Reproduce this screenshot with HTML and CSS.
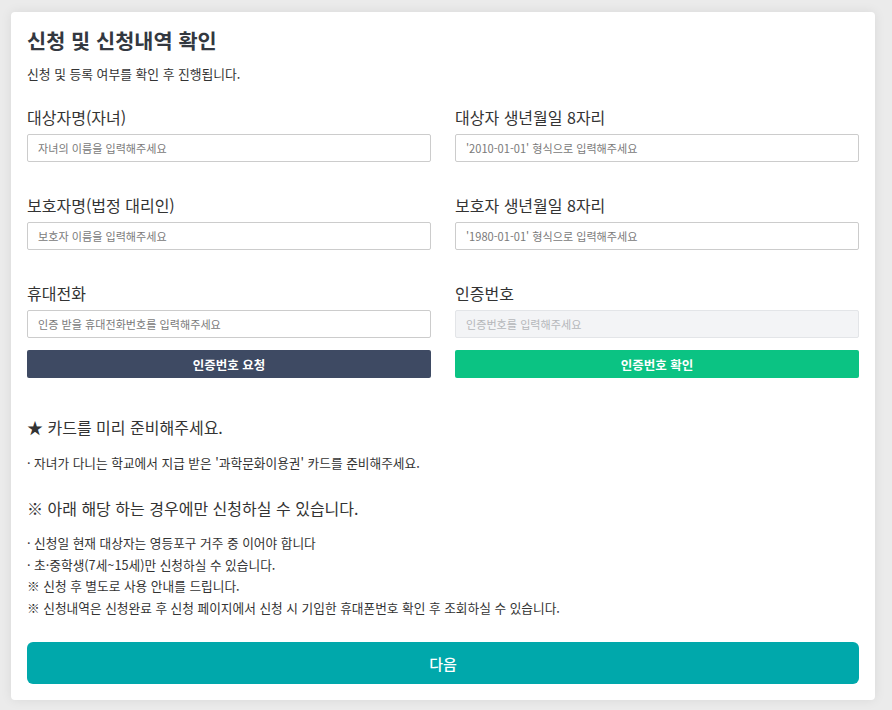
FILE: index.html
```html
<!DOCTYPE html>
<html lang="ko">
<head>
<meta charset="utf-8">
<title>신청 및 신청내역 확인</title>
<link rel="stylesheet" href="styles.css">
</head>
<body>
<div class="card">
  <h1 class="title">신청 및 신청내역 확인</h1>
  <p class="subtitle">신청 및 등록 여부를 확인 후 진행됩니다.</p>
  <div class="form-grid">
    <div class="field">
      <label class="label">대상자명(자녀)</label>
      <input class="input" type="text" placeholder="자녀의 이름을 입력해주세요">
    </div>
    <div class="field">
      <label class="label">대상자 생년월일 8자리</label>
      <input class="input" type="text" placeholder="'2010-01-01' 형식으로 입력해주세요">
    </div>
    <div class="field">
      <label class="label">보호자명(법정 대리인)</label>
      <input class="input" type="text" placeholder="보호자 이름을 입력해주세요">
    </div>
    <div class="field">
      <label class="label">보호자 생년월일 8자리</label>
      <input class="input" type="text" placeholder="'1980-01-01' 형식으로 입력해주세요">
    </div>
    <div class="field">
      <label class="label">휴대전화</label>
      <input class="input" type="text" placeholder="인증 받을 휴대전화번호를 입력해주세요">
      <button class="btn btn-dark" type="button">인증번호 요청</button>
    </div>
    <div class="field">
      <label class="label">인증번호</label>
      <input class="input input-disabled" type="text" placeholder="인증번호를 입력해주세요" disabled>
      <button class="btn btn-green" type="button">인증번호 확인</button>
    </div>
  </div>

  <h2 class="notice-head notice-first">★ 카드를 미리 준비해주세요.</h2>
  <p class="notice-text">· 자녀가 다니는 학교에서 지급 받은 '과학문화이용권' 카드를 준비해주세요.</p>

  <h2 class="notice-head notice-second">※ 아래 해당 하는 경우에만 신청하실 수 있습니다.</h2>
  <ul class="notice-list">
    <li>· 신청일 현재 대상자는 영등포구 거주 중 이어야 합니다</li>
    <li>· 초·중학생(7세~15세)만 신청하실 수 있습니다.</li>
    <li>※ 신청 후 별도로 사용 안내를 드립니다.</li>
    <li>※ 신청내역은 신청완료 후 신청 페이지에서 신청 시 기입한 휴대폰번호 확인 후 조회하실 수 있습니다.</li>
  </ul>

  <button class="btn-next" type="button">다음</button>
</div>
</body>
</html>
```

FILE: styles.css
```css
* {
  box-sizing: border-box;
}

html, body {
  margin: 0;
  padding: 0;
}

body {
  background: #ebebeb;
  padding: 12px 17px 10px 11px;
  font-family: "Noto Sans CJK KR", "Noto Sans", sans-serif;
  color: #333;
}

.card {
  background: #fff;
  border-radius: 4px;
  box-shadow: 0 0 12px rgba(0, 0, 0, 0.08);
  padding: 13px 16px 16px;
  display: flex;
  flex-direction: column;
}

.title {
  margin: 0;
  font-size: 20.8px;
  line-height: 30px;
  font-weight: 700;
  color: #333840;
}

.subtitle {
  margin: 9px 0 0;
  font-size: 12.8px;
  line-height: 19px;
  color: #333;
}

.form-grid {
  margin-top: 23px;
  display: grid;
  grid-template-columns: 1fr 1fr;
  column-gap: 24px;
  row-gap: 32px;
}

.field {
  display: flex;
  flex-direction: column;
}

.label {
  font-size: 16px;
  line-height: 22px;
  color: #333;
  margin-bottom: 6px;
}

.input {
  height: 28px;
  border: 1px solid #cccccc;
  border-radius: 2px;
  padding: 0 10px;
  font-family: inherit;
  font-size: 11.1px;
  color: #333;
  background: #fff;
  outline: none;
}

.input::placeholder {
  color: #7a7a7a;
}

.input-disabled {
  background: #f3f4f6;
  border-color: #e3e5e8;
}

.input-disabled::placeholder {
  color: #b5b7ba;
}

.btn {
  margin-top: 12px;
  height: 28px;
  border: none;
  border-radius: 2px;
  font-family: inherit;
  font-size: 12.5px;
  font-weight: 700;
  color: #fff;
  cursor: pointer;
}

.btn-dark {
  background: #3e4a63;
}

.btn-green {
  background: #0bc383;
}

.notice-head {
  margin: 0;
  font-size: 16px;
  line-height: 22px;
  font-weight: 400;
  color: #333;
}

.notice-first {
  margin-top: 38px;
}

.notice-second {
  margin-top: 24px;
}

.notice-text {
  margin: 15px 0 0;
  font-size: 12.7px;
  line-height: 20px;
  color: #333;
}

.notice-list {
  list-style: none;
  margin: 13px 0 0;
  padding: 0;
  font-size: 12.7px;
  line-height: 21.5px;
  color: #333;
}

.btn-next {
  margin-top: 24px;
  height: 42px;
  border: none;
  border-radius: 6px;
  background: #00a8ab;
  color: #fff;
  font-family: inherit;
  font-size: 15px;
  font-weight: 500;
  cursor: pointer;
}
```
